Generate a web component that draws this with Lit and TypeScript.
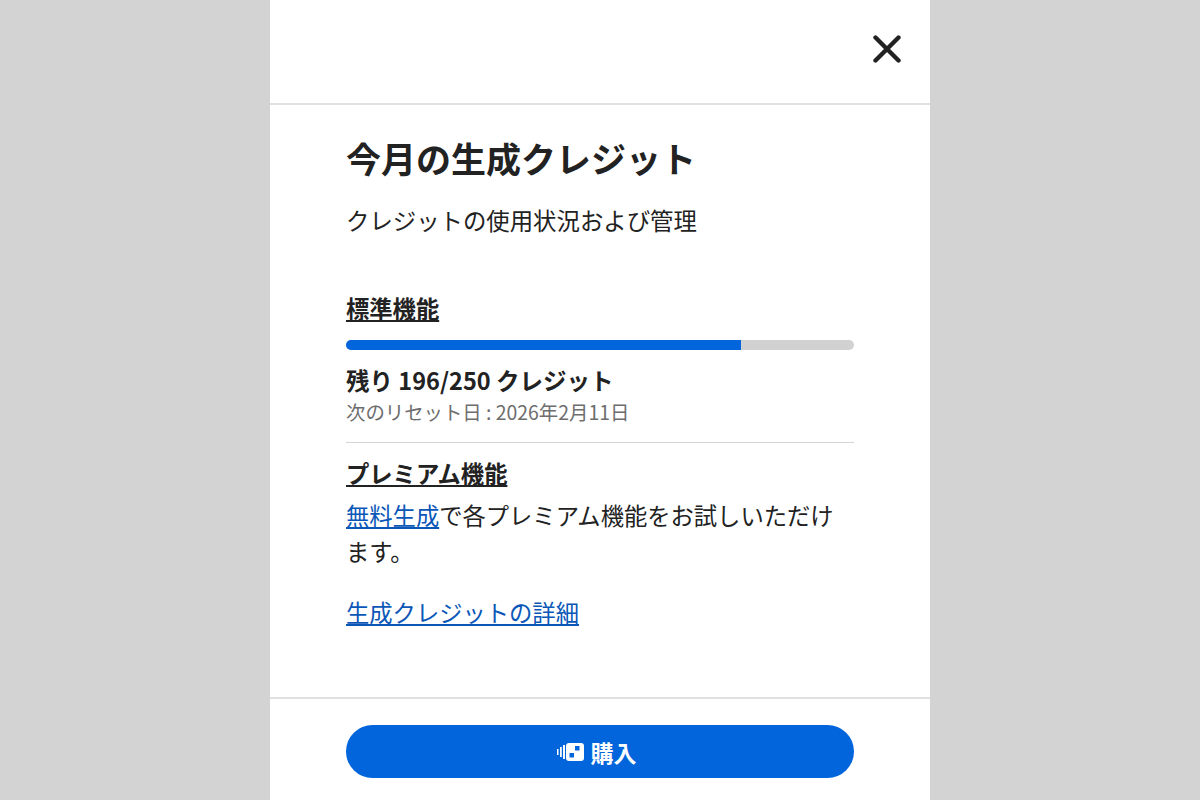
import { LitElement, html, css } from "lit";
import { customElement } from "lit/decorators.js";

@customElement("app-root")
export class AppRoot extends LitElement {
  static styles = css`
    :host { display: flex; justify-content: center; height: 800px; background: #d3d3d3; overflow: hidden;
      font-family: "Noto Sans CJK JP", "Noto Sans", sans-serif; color: #222; }
    .modal { width: 660px; height: 800px; background: #fff; display: flex; flex-direction: column; }
    .top { height: 105px; box-sizing: border-box; flex: none; border-bottom: 2px solid #e1e1e1; display: flex; justify-content: flex-end; align-items: flex-start; padding: 35px 29px 0 0; }
    .top svg { display: block; }
    .body { flex: 1; padding: 0 76px; display: flex; flex-direction: column; }
    h1 { margin: 31px 0 0; font-size: 35px; line-height: 44px; font-weight: 700; }
    .sub { margin-top: 23px; font-size: 23.4px; line-height: 34px; }
    .sec { margin-top: 54px; font-size: 23.3px; line-height: 34px; font-weight: 700; text-decoration: underline; }
    .bar { margin-top: 15px; height: 10px; border-radius: 5px; background: #d1d1d1; overflow: hidden; }
    .fill { height: 100%; background: #0265dc; }
    .left { margin-top: 13px; font-size: 23.5px; line-height: 34px; font-weight: 700; }
    .reset { font-size: 19.4px; line-height: 28px; margin-top: 1px; color: #6d6d6d; }
    .rule { height: 1px; background: #d5d5d5; margin-top: 16px; }
    .prem { margin-top: 13px; font-size: 23.3px; line-height: 34px; font-weight: 700; text-decoration: underline; }
    .desc { margin-top: 7px; font-size: 23.3px; line-height: 36px; }
    a { color: #0b57b8; text-decoration: underline; }
    .more { margin-top: 25px; font-size: 23.3px; line-height: 36px; }
    .foot { flex: none; height: 103px; border-top: 2px solid #e1e1e1; padding: 26px 76px 0; box-sizing: border-box; }
    .buy { height: 53px; border-radius: 27px; background: #0265dc; color: #fff; display: flex; align-items: center; justify-content: center; gap: 7px; font-size: 23px; font-weight: 700; padding-right: 7px; box-sizing: border-box; }
    .buy svg { display: block; }
  `;
  render() {
    const fill = 77.8;
    return html`<div class="modal">
      <div class="top">
        <svg width="28" height="28" viewBox="0 0 28 28"><path d="M2.500 2.500 25.500 25.500M25.500 2.500 2.500 25.500" stroke="#222" stroke-width="4.400" stroke-linecap="round" fill="none"/></svg>
      </div>
      <div class="body">
        <h1>今月の生成クレジット</h1>
        <div class="sub">クレジットの使用状況および管理</div>
        <div class="sec">標準機能</div>
        <div class="bar"><div class="fill" style="width:${fill}%"></div></div>
        <div class="left">残り 196/250 クレジット</div>
        <div class="reset">次のリセット日 : 2026年2月11日</div>
        <div class="rule"></div>
        <div class="prem">プレミアム機能</div>
        <div class="desc"><a>無料生成</a>で各プレミアム機能をお試しいただけます。</div>
        <div class="more"><a>生成クレジットの詳細</a></div>
      </div>
      <div class="foot">
        <div class="buy">
          <svg width="27" height="18" viewBox="0 0 27 18"><path fill="#fff" d="M0 6h1.500v6H0zM3 4h1.800v10H3zM6 2h2v14H6z"/><path fill="#fff" fill-rule="evenodd" d="M12 0h12a3 3 0 0 1 3 3v12a3 3 0 0 1-3 3H12a3 3 0 0 1-3-3V3a3 3 0 0 1 3-3zM18 3v4.500h4.500V3zM12.500 10v4.500H17V10z"/></svg>
          <span>購入</span>
        </div>
      </div>
    </div>`;
  }
}
